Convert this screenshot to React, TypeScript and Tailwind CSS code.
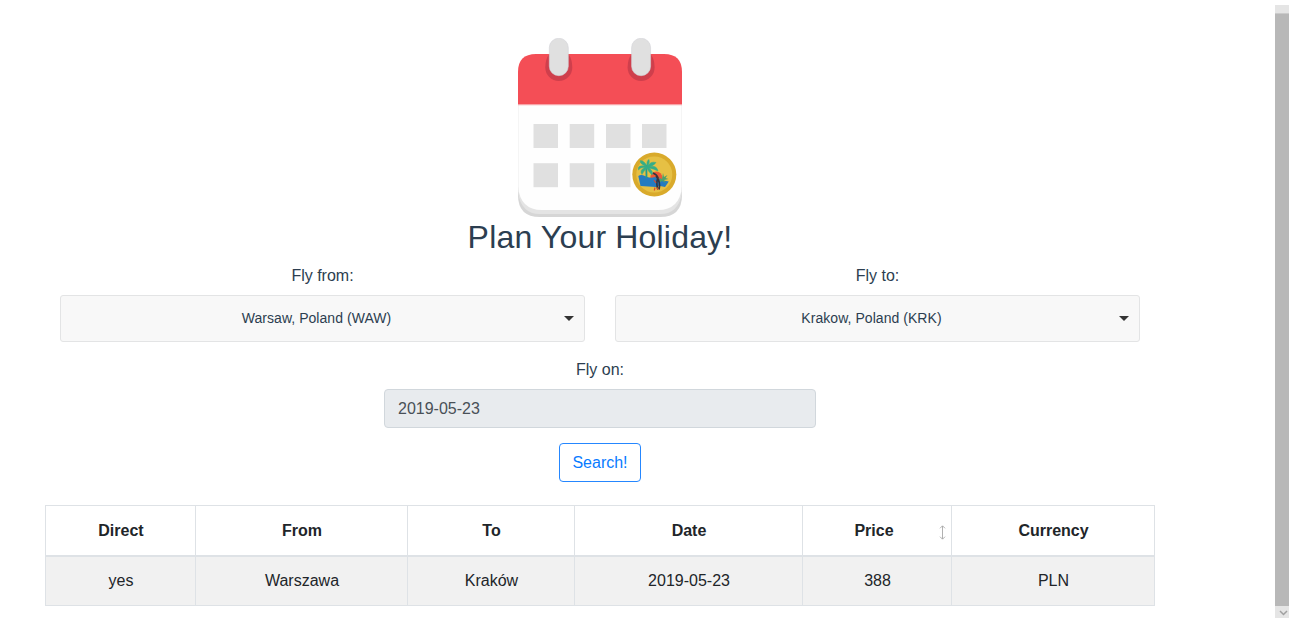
import React from 'react';

const columns = [
  { title: 'Direct', value: 'yes' },
  { title: 'From', value: 'Warszawa' },
  { title: 'To', value: 'Kraków' },
  { title: 'Date', value: '2019-05-23' },
  { title: 'Price', value: '388', sortable: true },
  { title: 'Currency', value: 'PLN' },
];

function CalendarLogo() {
  return (
    <svg className="block h-[180px] w-[164px]" viewBox="518 38 164 180" aria-hidden="true">
      <path d="M518 90H682V195Q682 217 660 217H540Q518 217 518 195Z" fill="#d6d6d6" />
      <path d="M518 90H682V192Q679 214 660 214H540Q521 214 518 192Z" fill="#e4e4e4" />
      <path d="M518 90H682V186Q680 210 658 210H542Q520 210 518 186Z" fill="#fefefe" />
      <path d="M518.3 104V192M681.7 104V192" stroke="#ececec" strokeWidth=".6" />
      <path d="M518 104.5V72Q518 54 536 54H664Q682 54 682 72V104.5Z" fill="#f44e56" />
      <path d="M518 104.8H682" stroke="#f7a1a5" strokeWidth=".8" />
      {[558.8, 641.1].map((x) => (
        <g key={x}>
          <path d={`M${x - 9.5} 54h19q4 5 4 13.5a13.5 13.5 0 0 1-27 0q0-8.500 4-13.500Z`} fill="#cf3f4c" />
          <rect x={x - 9.5} y="38.200" width="19" height="37.500" rx="9.500" fill="#e0e0e0" stroke="#d2d2d6" strokeWidth=".6" />
        </g>
      ))}
      {[533.5, 569.7, 606, 642].map((x) => (
        <g key={x} fill="#e0e0e0">
          <rect x={x} y="124" width="24.500" height="24" />
          {x < 640 && <rect x={x} y="163.200" width="24.500" height="24" />}
        </g>
      ))}
      <circle cx="654.300" cy="174.500" r="22" fill="#d9aa2b" />
      <circle cx="654.300" cy="174.500" r="18" fill="#e6c044" />
      <circle cx="656.300" cy="177.500" r="6" fill="#ed5936" />
      <path d="M638.300 176Q641 174 645 176Q650 179 655 177Q660 180 668.800 181.500L665 187L660 186L656 187L640.500 186Z" fill="#247bc0" />
      <path d="M647 165Q646 171 646.500 178" stroke="#239a8d" strokeWidth="1.800" fill="none" />
      <path d="M647.200 167Q646 161 649 159.500Q650 162 648.300 166Q650 161 656 162.500Q654 166 649 166.500Q657 165 658 171Q654 169 649 168Q654 172 652 175Q648 171 647.500 168.500Q644 170 642 174.500Q639 170 645 167.500Q640 167 638.500 170Q637 165 645 166Q639 163 640.500 160.500Q645 161 647.200 167Z" fill="#35ad87" stroke="#35ad87" strokeWidth=".5" />
      <path d="M662 179L663 173L664 177L667.500 175L665.500 178L668.500 179L664 180L666 183L662 181L659 183L660 179L657.500 177Z" fill="#4b9f6b" />
      <path d="M653 173Q657 174.500 658 178Q656 182 657.500 188.500M656 176Q661 182 659 189.500" stroke="#343440" strokeWidth="1.700" fill="none" />
      <path d="M655 187.500L654.300 190.500M657.500 187.500V190M654 180L656 183" stroke="#d8492f" strokeWidth="1.200" />
    </svg>
  );
}

function Airport({ label, value }: { label: string; value: string }) {
  return (
    <div className="w-[525px] text-center">
      <div className="mb-[7px] h-6 text-base leading-6">{label}</div>
      <button className="flex h-[47px] w-full items-center rounded-[3px] border border-[#e3e4e5] bg-[#f8f8f8] pr-[10px] pl-[11px] text-[14px]">
        <span className="flex-1 pr-[3px] tracking-[0.05px]">{value}</span>
        <svg className="h-[5px] w-[10px]" viewBox="0 0 10 5" aria-hidden="true"><path d="M0 0H10L5 5Z" fill="#343434" /></svg>
      </button>
    </div>
  );
}

export default function App() {
  return (
    <div className="flex h-[627px] w-full justify-between overflow-hidden bg-white pr-[2px] pl-[45px] font-['Liberation_Sans',Arial,sans-serif] text-[#2c3e50]">
      <main className="flex w-[1110px] flex-col items-center pt-[38px]">
        <CalendarLogo />
        <h1 className="h-[38px] text-[32px] leading-[38px] tracking-[0.18px] whitespace-nowrap">Plan Your Holiday!</h1>
        <div className="mt-2 flex gap-[30px]">
          <Airport label="Fly from:" value="Warsaw, Poland (WAW)" />
          <Airport label="Fly to:" value="Krakow, Poland (KRK)" />
        </div>
        <div className="mt-4 h-6 text-base leading-6">Fly on:</div>
        <div className="mt-[7px] flex h-[39px] w-[432px] items-center rounded border border-[#d1d7dc] bg-[#e8ebee] px-[13px] pt-px text-base text-[#495057]">2019-05-23</div>
        <button className="mt-[15px] h-[39px] w-[82px] shrink-0 rounded border border-[#2587ff] pt-px text-base text-[#087bff]">Search!</button>
        <table className="mt-[23px] w-[1110px] table-fixed border-collapse self-start text-center text-base text-[#212529]">
          <colgroup>
            <col className="w-[150px]" /><col className="w-[212px]" /><col className="w-[167px]" /><col className="w-[228px]" /><col className="w-[149px]" /><col className="w-[203px]" />
          </colgroup>
          <thead>
            <tr className="h-[50px]">
              {columns.map((column) => (
                <th key={column.title} className="border border-b-2 border-[#dee2e6] p-0 pt-[2px] pl-px font-bold">
                  {column.sortable ? (
                    <div className="flex items-center pr-[5px] pl-[5px]">
                      <span className="flex-1">{column.title}</span>
                      <svg className="mt-[2px] h-[15px] w-[7px]" viewBox="0 0 7 15" fill="none" stroke="#a8a8a8" aria-hidden="true"><path d="M3.500 1V14M1 3.300L3.500 .8L6 3.300M1 11.700L3.500 14.200L6 11.700" strokeWidth=".9" /></svg>
                    </div>
                  ) : column.title}
                </th>
              ))}
            </tr>
          </thead>
          <tbody>
            <tr className="h-[50px] bg-[#f1f1f1]">
              {columns.map((column) => <td key={column.title} className="border border-[#dee2e6] p-0 pt-px pl-px">{column.value}</td>)}
            </tr>
          </tbody>
        </table>
      </main>
      <div className="mt-[5px] flex h-[613px] w-[14px] flex-col bg-[#e5e5e5]" aria-hidden="true">
        <div className="h-2 shrink-0" />
        <div className="flex-1 border-t border-[#cbcbcb] bg-[#b8b8b8]" />
        <div className="flex h-3 items-center justify-center pt-px pl-[2px]">
          <svg className="h-[6px] w-[9px]" viewBox="0 0 9 6"><path d="M1 1L4.500 4.500L8 1" fill="none" stroke="#a0a0a0" strokeWidth="1.500" /></svg>
        </div>
      </div>
    </div>
  );
}
